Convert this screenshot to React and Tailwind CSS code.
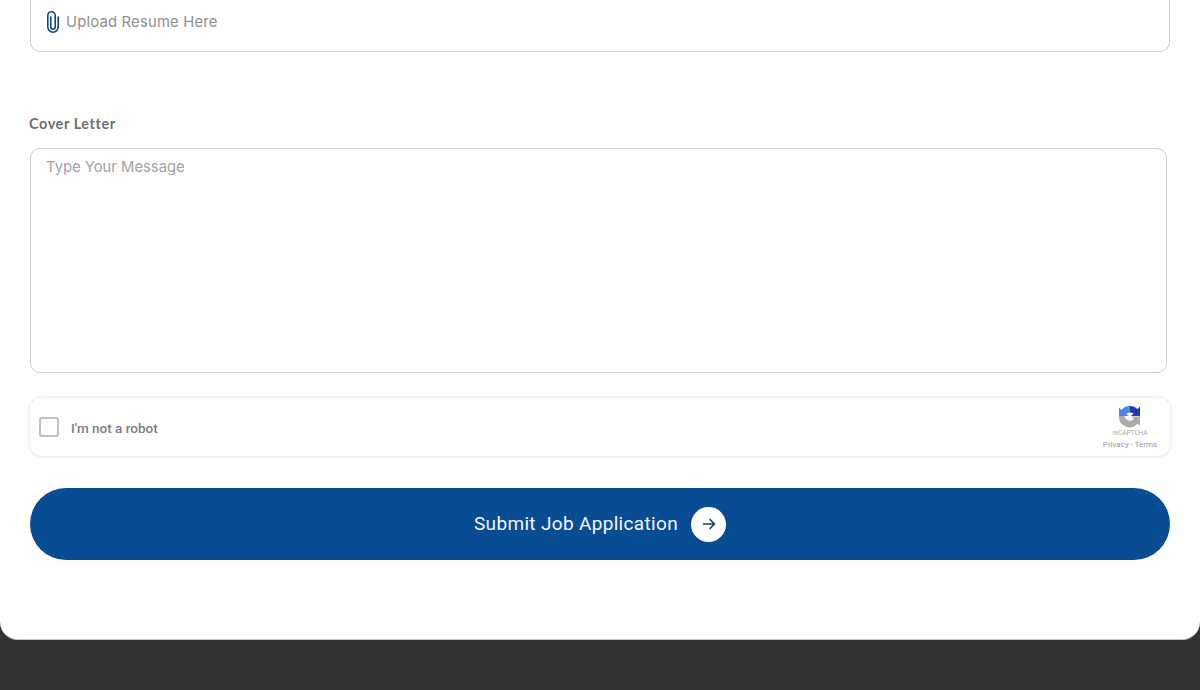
const App = () => {
  return (
    <div className="h-[690px] overflow-hidden bg-[#323232]">
      <div className="h-[640px] rounded-b-[18px] border-b border-[#c9c9c9] bg-white pl-[30px] pr-[30px] font-['Inter',sans-serif]">
        {/* Upload */}
        <div className="flex h-[52px] items-center gap-[6px] rounded-b-[10px] border border-t-0 border-[#cfcfcf] pb-[7px] pl-[15px]">
          <svg width="14" height="22" viewBox="0 0 14 22" fill="none" stroke="#0b4a78" strokeWidth="1.6" strokeLinecap="round">
            <path d="M4.800 6v10a2.200 2.200 0 0 0 4.400 0V4.500a3.700 3.700 0 0 0-7.400 0V16a5.200 5.200 0 0 0 10.400 0V6" />
          </svg>
          <span className="text-[14.8px] tracking-[0.2px] text-[#8f8f8f]">Upload Resume Here</span>
        </div>

        {/* Cover letter */}
        <label className="-ml-px mt-[63px] block text-[14.500px] leading-[18px] font-bold tracking-[0.55px] text-[#6f6f6f] font-['Lato',sans-serif]">
          Cover Letter
        </label>
        <div className="mt-[15px] mr-[3px] h-[225px] rounded-[10px] border border-[#cfcfcf] pl-[15px] pt-[8px] text-[14.800px] leading-[20px] text-[#a3a3a3]">
          Type Your Message
        </div>

        {/* Captcha */}
        <div className="mt-[24px] -mx-px flex h-[60px] items-center justify-between rounded-[12px] border border-[#ececec] pl-[9px] pr-[13px] shadow-[0_0_3px_rgba(0,0,0,0.1)] font-['Roboto',sans-serif]">
          <div className="flex items-center gap-[12px]">
            <div className="h-[20px] w-[20px] rounded-[3px] border-2 border-[#c1c1c1]" />
            <span className="relative top-[1px] text-[13.500px] font-medium text-[#7d7d7d]">I'm not a robot</span>
          </div>
          <div className="flex w-[54px] flex-col items-center">
            <svg width="24" height="24" viewBox="0 0 24 24">
              <path d="M1 12V3.500l2.500 2.500A10 10 0 0 1 12 2v6.500a5 5 0 0 0-3.500 1.500l2 2z" fill="#4a86e8" />
              <path d="M12 2a10 10 0 0 1 7.500 3L22 2.500V12h-9l2.500-2.500A5 5 0 0 0 12 8.500z" fill="#1c3aa9" />
              <path d="M1 12h5.500a5.500 5.500 0 0 0 9.500 3l-2.500-2.500H22V22l-2.500-2.500A10.500 10.500 0 0 1 1 12z" fill="#ababab" />
            </svg>
            <span className="mt-[1px] text-[6.500px] leading-[8px] text-[#a8a8a8]">reCAPTCHA</span>
            <span className="mt-[2px] whitespace-nowrap text-[8px] leading-[11px] text-[#999999]">Privacy - Terms</span>
          </div>
        </div>

        {/* Submit */}
        <button className="mt-[31px] flex h-[72px] w-full items-center justify-center gap-[13px] rounded-full bg-[#084c94] text-[19px] tracking-[0.33px] text-[#f4f8fc] font-['Roboto',sans-serif]">
          Submit Job Application
          <span className="flex h-[35px] w-[35px] items-center justify-center rounded-full bg-white">
            <svg width="14" height="14" viewBox="0 0 14 14" fill="none" stroke="#123f6d" strokeWidth="1.600" strokeLinecap="round" strokeLinejoin="round">
              <path d="M1.500 7h11M8 2.500 12.500 7 8 11.500" />
            </svg>
          </span>
        </button>
      </div>
    </div>
  );
};

export default App;
